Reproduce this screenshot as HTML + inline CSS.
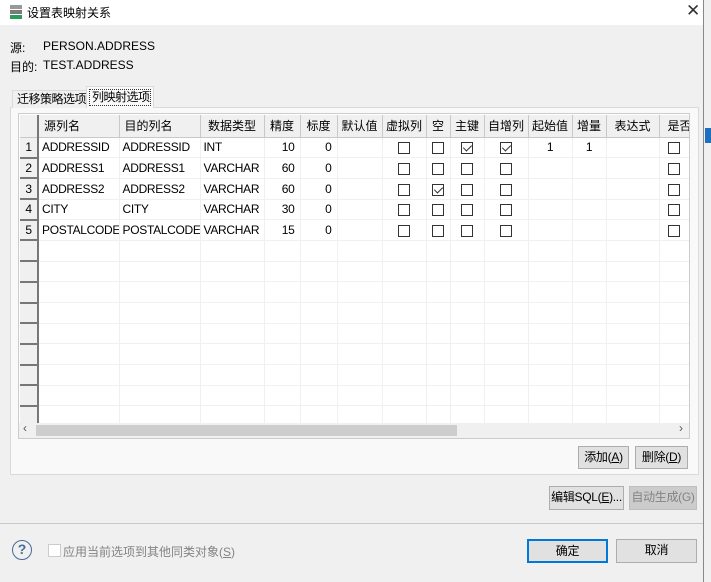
<!DOCTYPE html>
<html><head><meta charset="utf-8"><style>
*{box-sizing:border-box;margin:0;padding:0}
body{width:711px;height:582px;overflow:hidden;background:#f0f0f0;font-family:"Liberation Sans","Noto Sans CJK SC",sans-serif;font-size:12px;color:#000;position:relative}
.a{position:absolute;white-space:nowrap}
.dlg{left:0;top:0;width:704px;height:582px;background:#f0f0f0;border-right:1px solid #888}
.title{left:0;top:0;width:703px;height:25px;background:#fff}
.btn{position:absolute;background:#e1e1e1;border:1px solid #adadad;text-align:center;line-height:21px;font-size:12px;white-space:nowrap;letter-spacing:-0.3px}
table{border-collapse:collapse;table-layout:fixed;position:absolute;left:20px;top:115px;width:679px}
td{height:20.7px;border-right:1px solid #f0f0f0;border-bottom:1px solid #f0f0f0;padding:0 3px;white-space:nowrap;overflow:hidden;background:#fff;font-size:12px;letter-spacing:-0.3px}
tr.h td{height:22px;background:#f0f0f0;border-right:1px solid #c8c8c8;border-bottom:1px solid #c8c8c8;text-align:center;padding:0 1px;letter-spacing:0}
td.rh{background:#f0f0f0;border-right:2px solid #777;border-bottom:2px solid #777;text-align:center;padding:0}
.r{text-align:right;padding-right:5px!important}.c{text-align:center}
.cb{display:inline-block;width:12px;height:12px;border:1px solid #333;vertical-align:middle;position:relative;background:#fff}
.ck::after{content:"";position:absolute;left:3px;top:0px;width:4px;height:7px;border-right:1px solid #333;border-bottom:1px solid #333;transform:rotate(45deg)}
</style></head><body>
<div class="a dlg"></div>
<div class="a title"></div>
<div class="a" style="left:10px;top:5px;width:12px;height:4px;background:#999"></div>
<div class="a" style="left:10px;top:10px;width:12px;height:4px;background:#7a7a7a"></div>
<div class="a" style="left:10px;top:15px;width:12px;height:4px;background:#2a9d5a"></div>
<div class="a" style="left:27px;top:4px;font-size:12px">设置表映射关系</div>
<div class="a" style="left:686px;top:1px;font-size:17px;color:#333">✕</div>
<div class="a" style="left:10px;top:39px">源:</div>
<div class="a" style="left:43px;top:39px">PERSON.ADDRESS</div>
<div class="a" style="left:10px;top:58px">目的:</div>
<div class="a" style="left:43px;top:58px">TEST.ADDRESS</div>
<div class="a" style="left:10px;top:107px;width:689px;height:368px;background:#f9f9f9;border:1px solid #dadada"></div>
<div class="a" style="left:12px;top:90px;width:75px;height:18px;border:1px solid #dadada;border-bottom:none;background:#f0f0f0;padding-left:4px;line-height:17px;letter-spacing:-0.5px">迁移策略选项</div>
<div class="a" style="left:86px;top:86px;width:68px;height:22px;border:1px solid #dadada;border-bottom:none;background:#f9f9f9"><div style="margin:2px;border:1px dotted #333;height:17px;line-height:15px;padding-left:2px;letter-spacing:-0.5px;white-space:nowrap;overflow:hidden">列映射选项</div></div>
<div class="a" style="left:18px;top:113px;width:672px;height:326px;border:1px solid #ccc;background:#fff;overflow:hidden">
<table style="left:1px;top:1px">
<colgroup><col style="width:18px"><col style="width:81px"><col style="width:81px"><col style="width:64px"><col style="width:36px"><col style="width:37px"><col style="width:45px"><col style="width:44px"><col style="width:24px"><col style="width:34px"><col style="width:44px"><col style="width:44px"><col style="width:34px"><col style="width:53px"><col style="width:40px"></colgroup>
<tr class="h"><td style="border-right:2px solid #777"></td><td style="text-align:left;padding-left:5px">源列名</td><td style="text-align:left;padding-left:5px">目的列名</td><td>数据类型</td><td>精度</td><td>标度</td><td>默认值</td><td>虚拟列</td><td>空</td><td>主键</td><td>自增列</td><td>起始值</td><td>增量</td><td>表达式</td><td style="text-align:left;padding-left:8px">是否</td></tr>
<tr><td class="rh">1</td><td>ADDRESSID</td><td>ADDRESSID</td><td>INT</td><td class="r">10</td><td class="r">0</td><td></td><td class="c"><i class="cb"></i></td><td class="c"><i class="cb"></i></td><td class="c"><i class="cb ck"></i></td><td class="c"><i class="cb ck"></i></td><td class="c">1</td><td class="c">1</td><td></td><td style="padding-left:8px"><i class="cb"></i></td></tr>
<tr><td class="rh">2</td><td>ADDRESS1</td><td>ADDRESS1</td><td>VARCHAR</td><td class="r">60</td><td class="r">0</td><td></td><td class="c"><i class="cb"></i></td><td class="c"><i class="cb"></i></td><td class="c"><i class="cb"></i></td><td class="c"><i class="cb"></i></td><td></td><td></td><td></td><td style="padding-left:8px"><i class="cb"></i></td></tr>
<tr><td class="rh">3</td><td>ADDRESS2</td><td>ADDRESS2</td><td>VARCHAR</td><td class="r">60</td><td class="r">0</td><td></td><td class="c"><i class="cb"></i></td><td class="c"><i class="cb ck"></i></td><td class="c"><i class="cb"></i></td><td class="c"><i class="cb"></i></td><td></td><td></td><td></td><td style="padding-left:8px"><i class="cb"></i></td></tr>
<tr><td class="rh">4</td><td>CITY</td><td>CITY</td><td>VARCHAR</td><td class="r">30</td><td class="r">0</td><td></td><td class="c"><i class="cb"></i></td><td class="c"><i class="cb"></i></td><td class="c"><i class="cb"></i></td><td class="c"><i class="cb"></i></td><td></td><td></td><td></td><td style="padding-left:8px"><i class="cb"></i></td></tr>
<tr><td class="rh">5</td><td>POSTALCODE</td><td>POSTALCODE</td><td>VARCHAR</td><td class="r">15</td><td class="r">0</td><td></td><td class="c"><i class="cb"></i></td><td class="c"><i class="cb"></i></td><td class="c"><i class="cb"></i></td><td class="c"><i class="cb"></i></td><td></td><td></td><td></td><td style="padding-left:8px"><i class="cb"></i></td></tr>
<tr><td class="rh"></td><td></td><td></td><td></td><td></td><td></td><td></td><td></td><td></td><td></td><td></td><td></td><td></td><td></td><td></td></tr>
<tr><td class="rh"></td><td></td><td></td><td></td><td></td><td></td><td></td><td></td><td></td><td></td><td></td><td></td><td></td><td></td><td></td></tr>
<tr><td class="rh"></td><td></td><td></td><td></td><td></td><td></td><td></td><td></td><td></td><td></td><td></td><td></td><td></td><td></td><td></td></tr>
<tr><td class="rh"></td><td></td><td></td><td></td><td></td><td></td><td></td><td></td><td></td><td></td><td></td><td></td><td></td><td></td><td></td></tr>
<tr><td class="rh"></td><td></td><td></td><td></td><td></td><td></td><td></td><td></td><td></td><td></td><td></td><td></td><td></td><td></td><td></td></tr>
<tr><td class="rh"></td><td></td><td></td><td></td><td></td><td></td><td></td><td></td><td></td><td></td><td></td><td></td><td></td><td></td><td></td></tr>
<tr><td class="rh"></td><td></td><td></td><td></td><td></td><td></td><td></td><td></td><td></td><td></td><td></td><td></td><td></td><td></td><td></td></tr>
<tr><td class="rh"></td><td></td><td></td><td></td><td></td><td></td><td></td><td></td><td></td><td></td><td></td><td></td><td></td><td></td><td></td></tr>
<tr><td class="rh"></td><td></td><td></td><td></td><td></td><td></td><td></td><td></td><td></td><td></td><td></td><td></td><td></td><td></td><td></td></tr>
</table>
<div class="a" style="left:0;top:309px;width:670px;height:15px;background:#f0f0f0"></div>
<div class="a" style="left:17px;top:311px;width:421px;height:11px;background:#cdcdcd"></div>
<div class="a" style="left:4px;top:307px;font-size:12px;color:#555">‹</div>
<div class="a" style="left:660px;top:307px;font-size:12px;color:#555">›</div>
</div>
<div class="btn" style="left:578px;top:446px;width:51px;height:23px">添加(<u>A</u>)</div>
<div class="btn" style="left:635px;top:446px;width:53px;height:23px">删除(<u>D</u>)</div>
<div class="btn" style="left:549px;top:486px;width:75px;height:24px">编辑SQL(<u>E</u>)...</div>
<div class="btn" style="left:629px;top:486px;width:68px;height:24px;background:#ccc;border-color:#bfbfbf;color:#838383">自动生成(G)</div>
<div class="a" style="left:0;top:523px;width:703px;height:1px;background:#c8c8c8"></div>
<div class="a" style="left:12px;top:540px;width:20px;height:20px;border:1.5px solid #4a6a9a;border-radius:50%;text-align:center;line-height:17px;font-weight:bold;color:#4a6a9a;font-size:14px">?</div>
<div class="a" style="left:48px;top:544px;width:13px;height:13px;border:1px solid #ccc;background:#fff"></div>
<div class="a" style="left:63px;top:543px;color:#838383">应用当前选项到其他同类对象(<u>S</u>)</div>
<div class="btn" style="left:527px;top:539px;width:81px;height:24px;border:2px solid #0078d7;line-height:20px">确定</div>
<div class="btn" style="left:616px;top:539px;width:81px;height:24px">取消</div>
<div class="a" style="left:705px;top:128px;width:6px;height:15px;background:#1f6fc0"></div>
</body></html>
